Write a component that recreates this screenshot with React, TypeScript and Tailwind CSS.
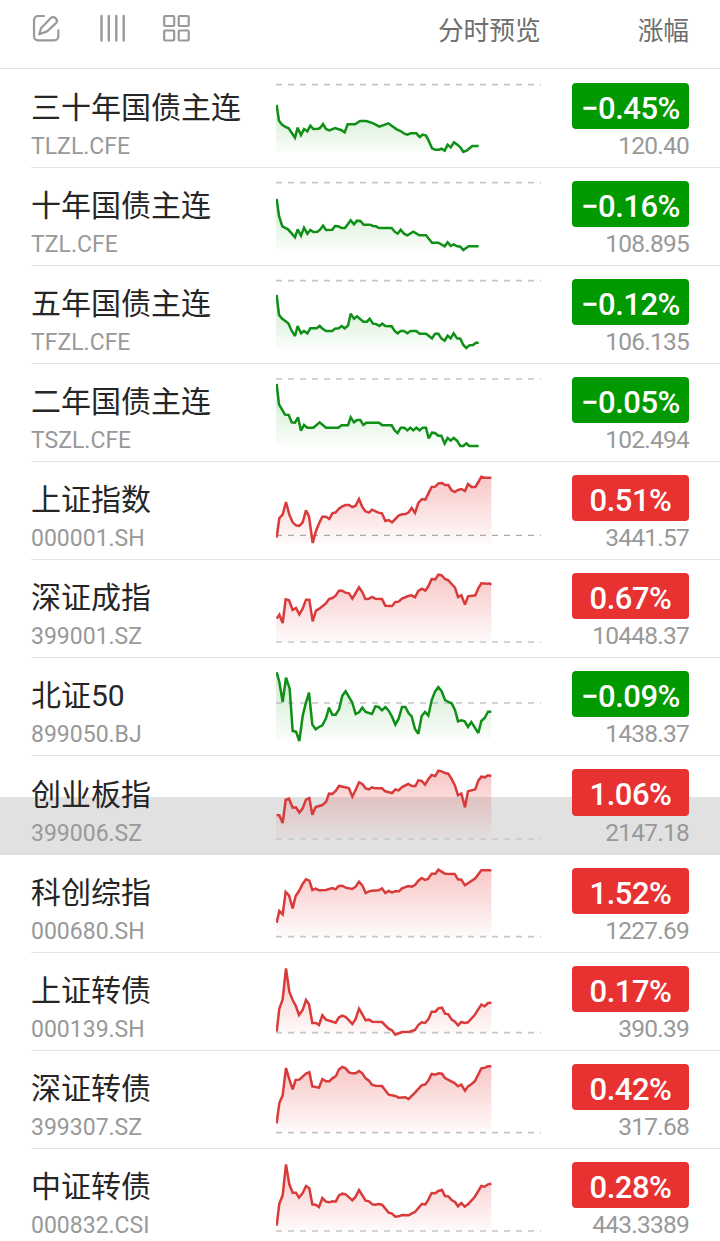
type Quote = {
  name: string;
  code: string;
  change: string;
  price: string;
  up: boolean;
  // Chart space: three units to a pixel, `top` is the upper edge of the row.
  top: number;
  base: number;
  floor: number;
  thin?: boolean;
  points: string;
};

const quotes: Quote[] = [
  {
    name: '三十年国债主连', code: 'TLZL.CFE', change: '−0.45%', price: '120.40', up: false, top: -3, base: 44, floor: 245,
    points: '35,105 42,152 50,163 60,170 71,175 80,188 90,203 98,173 108,195 117,177 127,184 136,167 145,177 160,176 166,173 174,162 183,177 193,181 210,174 228,180 239,187 248,163 270,163 285,153 304,153 325,160 343,170 370,160 395,178 407,183 418,191 427,194 437,190 454,190 464,201 473,194 483,197 491,212 501,235 511,239 523,239 529,236 539,242 548,224 557,232 567,217 577,224 586,232 595,246 606,241 622,228 641,228',
  },
  {
    name: '十年国债主连', code: 'TZL.CFE', change: '−0.16%', price: '108.895', up: false, top: 294, base: 338, floor: 539,
    points: '35,387 42,438 52,469 69,478 80,490 90,502 98,478 108,497 117,473 127,491 136,480 145,486 157,485 165,479 174,467 183,480 202,479 210,468 220,469 230,474 240,474 257,451 267,463 276,452 286,453 296,464 315,464 324,468 333,469 342,474 380,474 389,485 398,491 407,479 417,491 427,496 445,485 463,496 483,496 501,518 520,518 539,529 548,517 557,528 566,523 577,529 586,530 595,540 611,529 641,529',
  },
  {
    name: '五年国债主连', code: 'TFZL.CFE', change: '−0.12%', price: '106.135', up: false, top: 3, base: 47, floor: 248,
    points: '35,90 42,149 50,160 70,175 80,197 90,213 98,183 108,205 117,198 127,205 136,190 155,190 164,183 173,191 183,198 202,198 210,191 221,190 230,183 239,190 249,182 257,146 267,161 276,154 295,170 306,170 314,161 324,176 333,177 343,183 352,176 361,183 380,184 389,198 398,205 407,198 417,198 427,205 437,198 454,198 464,206 483,206 501,220 510,206 520,206 529,220 539,227 548,212 557,220 566,205 576,220 586,221 595,240 604,249 613,241 624,240 633,233 641,233',
  },
  {
    name: '二年国债主连', code: 'TSZL.CFE', change: '−0.05%', price: '102.494', up: false, top: 297, base: 342, floor: 543,
    points: '35,357 42,418 60,449 71,450 80,472 90,473 99,457 108,497 117,480 127,488 145,488 164,472 183,488 220,488 230,481 249,481 257,457 267,472 276,465 286,465 295,480 304,473 342,473 352,481 380,481 389,496 398,504 407,488 418,488 427,496 436,488 445,496 454,488 464,496 473,488 483,488 491,520 501,503 510,504 520,512 529,512 539,536 548,519 557,527 566,519 576,527 586,543 595,543 604,535 613,543 641,543',
  },
  {
    name: '上证指数', code: '000001.SH', change: '0.51%', price: '3441.57', up: true, top: 0, base: 220, floor: 244, thin: true,
    points: '35,227 43,168 53,158 63,120 73,158 83,181 93,190 103,192 113,181 123,145 132,163 143,243 153,207 163,182 172,164 183,164 193,171 202,154 212,151 222,140 232,133 242,129 252,129 262,135 272,131 282,111 292,135 301,148 312,152 321,143 340,152 351,154 361,177 371,174 381,181 391,171 401,161 411,157 422,156 431,151 440,138 450,153 460,123 471,111 481,113 490,95 500,75 511,74 520,64 531,63 540,69 550,69 559,84 569,90 579,84 589,81 600,87 609,66 620,75 631,75 640,60 649,44 659,47 679,47',
  },
  {
    name: '深证成指', code: '399001.SZ', change: '0.67%', price: '10448.37', up: true, top: 294, base: 540, floor: 540,
    points: '35,470 43,458 53,483 62,412 72,415 83,444 93,438 103,457 113,440 123,413 133,413 143,478 153,446 163,440 182,425 192,411 202,408 212,401 222,386 232,386 241,392 252,394 262,410 272,393 282,376 292,390 301,411 312,410 321,405 331,410 351,411 361,431 381,432 391,420 401,419 411,410 430,402 440,400 450,406 460,387 471,380 481,386 490,373 500,351 511,352 520,338 530,340 540,351 550,355 560,366 570,377 579,405 589,400 600,428 609,403 631,400 640,379 649,364 669,365 673,364 679,368',
  },
  {
    name: '北证50', code: '899050.BJ', change: '−0.09%', price: '1438.37', up: false, top: 0, base: 135, floor: 244, thin: true,
    points: '35,43 43,72 53,132 63,59 74,92 83,219 93,221 103,249 113,174 122,137 132,104 142,200 152,214 162,207 172,202 183,181 192,149 202,170 212,170 222,154 232,113 242,100 262,134 272,168 282,163 292,149 302,162 321,168 331,145 341,147 351,157 361,147 371,158 381,176 391,200 401,182 411,147 421,147 431,166 440,175 450,213 460,227 470,174 480,162 490,173 500,127 510,101 520,87 530,100 540,126 550,132 560,136 570,156 579,190 589,187 599,190 609,207 619,192 640,225 649,189 659,180 669,161 679,161',
  },
  {
    name: '创业板指', code: '399006.SZ', change: '1.06%', price: '2147.18', up: true, top: 294, base: 543, floor: 543,
    points: '35,471 43,472 53,495 62,426 72,422 83,449 93,448 103,464 113,451 123,425 133,420 142,470 152,447 172,441 183,432 192,407 202,408 212,399 222,384 241,388 252,391 262,416 272,395 282,373 292,378 302,391 312,394 321,388 331,391 351,391 361,400 381,405 391,394 401,397 411,387 430,378 440,384 451,384 460,367 470,369 480,380 490,364 500,351 511,354 520,338 530,340 540,345 550,347 560,363 570,383 579,412 589,407 600,448 609,400 631,394 640,368 649,356 660,358 669,352 679,354',
  },
  {
    name: '科创综指', code: '000680.SH', change: '1.52%', price: '1227.69', up: true, top: 3, base: 248, floor: 248,
    points: '35,206 43,171 53,181 62,114 72,124 83,163 92,126 102,111 113,90 123,76 133,80 142,108 152,104 162,109 183,108 202,102 212,106 221,96 232,95 242,101 262,105 272,98 282,83 292,94 302,117 312,112 321,110 341,109 351,103 361,117 371,111 381,115 391,112 402,112 411,103 430,96 440,98 450,93 460,80 470,72 480,78 489,75 500,59 511,59 520,47 540,59 569,60 579,76 589,77 600,94 631,73 649,49 679,49',
  },
  {
    name: '上证转债', code: '000139.SH', change: '0.17%', price: '390.39', up: true, top: 297, base: 536, floor: 543,
    points: '35,533 43,464 53,436 63,343 73,413 83,438 93,457 102,483 113,468 123,438 132,451 142,507 153,507 162,513 172,484 183,497 212,506 222,490 232,485 242,489 252,499 262,510 272,495 282,464 292,481 302,499 312,497 322,503 351,504 371,524 381,529 391,542 411,534 434,533 450,528 460,513 470,505 480,507 490,496 500,473 511,473 520,463 531,461 540,479 550,481 560,497 570,503 579,514 589,504 599,507 609,505 629,483 649,452 659,457 669,447 679,446',
  },
  {
    name: '深证转债', code: '399307.SZ', change: '0.42%', price: '317.68', up: true, top: 3, base: 248, floor: 248,
    points: '35,220 43,159 53,136 63,54 73,88 83,118 92,90 103,89 123,71 133,67 142,109 162,113 172,87 183,94 193,94 202,85 213,78 222,58 232,51 242,55 252,67 262,70 272,70 282,63 292,70 302,85 312,92 321,104 331,107 351,108 371,134 391,138 401,143 421,142 431,147 450,128 470,106 481,103 490,92 500,72 511,74 521,70 531,71 540,84 570,100 579,109 589,104 600,122 609,109 620,102 630,93 649,55 660,53 669,49 679,49',
  },
  {
    name: '中证转债', code: '000832.CSI', change: '0.28%', price: '443.3389', up: true, top: 297, base: 543, floor: 543,
    points: '35,527 43,461 53,436 63,343 73,403 83,428 93,428 102,443 113,429 123,408 133,415 142,463 153,465 162,471 172,444 183,455 193,457 202,454 212,455 222,436 232,431 242,433 262,451 272,440 282,420 302,452 312,454 322,463 331,464 341,462 351,464 371,488 381,491 391,500 401,499 411,495 431,496 441,490 450,486 470,462 481,463 490,449 500,429 511,430 520,423 531,420 540,438 550,439 560,450 570,456 579,469 589,459 599,470 609,463 629,441 649,408 659,410 669,403 679,401',
  },
];

function Sparkline({ q, index }: { q: Quote; index: number }) {
  const color = q.up ? '#d93a3a' : '#0f8f16';
  const id = `area-${index}`;
  const pts = q.points.split(' ');
  const ys = pts.map((p) => Number(p.split(',')[1]));
  return (
    <svg className="h-[97px] w-[265px]" viewBox={`33 ${q.top} 795 291`}>
      <defs>
        <linearGradient id={id} gradientUnits="userSpaceOnUse" x1="0" x2="0" y1={Math.min(...ys)} y2={q.floor}>
          <stop offset="0" stopColor={q.up ? '#e62e2e' : '#009900'} stopOpacity={q.up ? 0.27 : 0.2} />
          <stop offset="1" stopColor={q.up ? '#e62e2e' : '#009900'} stopOpacity="0.02" />
        </linearGradient>
      </defs>
      <path d={`M33,${q.floor} L33,${pts[0].split(',')[1]} L${pts.join(' L')} V${q.floor} Z`} fill={`url(#${id})`} />
      <line
        x1="33" x2="828" y1={q.base} y2={q.base}
        stroke={q.thin ? '#aaaaaa' : '#c6c6c6'} strokeWidth={q.thin ? 3.5 : 5} strokeDasharray="18 18"
      />
      <polyline points={q.points} fill="none" stroke={color} strokeWidth="7.5" strokeLinejoin="miter" strokeMiterlimit="2.5" />
    </svg>
  );
}

function Row({ q, index }: { q: Quote; index: number }) {
  const first = index === 0;
  const pressed = index === 7;
  return (
    <div
      className={`flex shrink-0 pl-[31px] ${first || pressed ? 'h-[99px]' : 'h-[98px]'} ${
        pressed ? 'bg-[linear-gradient(to_bottom,transparent_41px,#e1e1e1_41px)]' : ''
      }`}
    >
      <div className={`flex flex-1 border-b ${pressed ? 'border-[#dedede]' : 'border-[#e4e4e4]'}`}>
        <div className={`w-[245px] ${first || pressed ? 'pt-[19px]' : 'pt-[18px]'}`}>
          <div className="h-10 text-[30px] leading-10 whitespace-nowrap text-[#262626]">{q.name}</div>
          <div className="h-8 pt-[3px] text-[23px] leading-8 whitespace-nowrap text-[#999999]">{q.code}</div>
        </div>
        <Sparkline q={q} index={index} />
        <div className={`flex flex-1 flex-col items-end pr-[31px] ${first ? 'pt-[14px]' : 'pt-[13px]'}`}>
          <div
            className={`flex w-[117px] items-center justify-center rounded-[4px] pt-[4px] text-[31px] leading-none font-medium tracking-[-0.5px] text-white ${
              pressed ? 'h-[47px]' : 'h-[46px]'
            } ${q.up ? 'bg-[#e83232]' : 'bg-[#009900]'}`}
          >
            {q.change}
          </div>
          <div className="pt-[1px] text-[24.500px] leading-8 tracking-[-0.750px] text-[#999999]">{q.price}</div>
        </div>
      </div>
    </div>
  );
}

export default function App() {
  return (
    <div className="flex h-[1241px] w-[720px] flex-col overflow-hidden bg-white font-['Roboto','Noto_Sans_CJK_SC',sans-serif]">
      <header className="flex h-[69px] shrink-0 items-start border-b border-[#e4e4e4] pr-[31px] pl-[32px] text-[#999999]">
        <svg className="mt-[14px] h-7 w-7" viewBox="0 0 28 28" fill="none" stroke="currentColor" strokeWidth="2.200" strokeLinecap="round" strokeLinejoin="round">
          <path d="M12 2H6a4 4 0 0 0-4 4v16.300a4 4 0 0 0 4 4h16.300a4 4 0 0 0 4-4v-6" />
          <path d="M7.300 20.300 9 14.200 18.600 4.200a3.700 3.700 0 0 1 5.500 4.900L15 17.400Z" />
        </svg>
        <svg className="mt-[14px] ml-[39px] h-7 w-7" viewBox="0 0 28 28" fill="none" stroke="currentColor" strokeWidth="2.400" strokeLinecap="round">
          <path d="M2.500 2v24.500M9.800 2v24.500M17.300 2v24.500M24.700 2v24.500" />
        </svg>
        <svg className="mt-[14px] ml-[35px] h-7 w-7" viewBox="0 0 28 28" fill="none" stroke="currentColor" strokeWidth="2.200" strokeLinejoin="round">
          <rect x="2.200" y="2" width="10" height="10" rx="1" />
          <rect x="16.700" y="2" width="10" height="10" rx="1" />
          <rect x="2.200" y="16.500" width="10" height="10" rx="1" />
          <rect x="16.700" y="16.500" width="10" height="10" rx="1" />
        </svg>
        <div className="ml-auto flex gap-[97px] pt-[11px] text-[25.700px] leading-10 text-[#6e6e6e]">
          <span>分时预览</span>
          <span>涨幅</span>
        </div>
      </header>
      {quotes.map((q, i) => (
        <Row key={q.code} q={q} index={i} />
      ))}
    </div>
  );
}
